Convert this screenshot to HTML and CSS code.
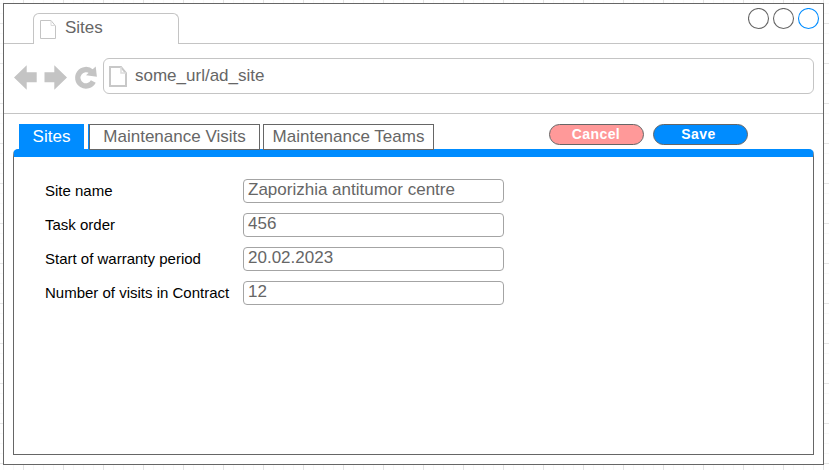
FILE: index.html
```html
<!DOCTYPE html>
<html lang="en">
<head>
<meta charset="utf-8">
<title>Sites</title>
<link rel="stylesheet" href="styles.css">
</head>
<body>
<div class="window">
  <header class="titlebar">
    <div class="browser-tab">
      <svg class="tab-icon" width="16" height="19" viewBox="0 0 16 19"><path d="M.5.5H11L15.500 6V18.500H.5Z" fill="#fff" stroke="#c4c4c4"/><path d="M11 .5V5.500H15.500" fill="none" stroke="#dcdcdc"/></svg>
      <span>Sites</span>
    </div>
    <svg class="controls" width="72" height="22" viewBox="0 0 72 22" fill="#fff" stroke-width="1.100"><circle cx="10.500" cy="10.500" r="10" stroke="#666"/><circle cx="35.500" cy="10.500" r="10" stroke="#666"/><circle cx="60.500" cy="10.500" r="10" stroke="#008cff"/></svg>
  </header>
  <div class="toolbar">
    <svg class="nav" width="84" height="26" viewBox="0 0 84 26" fill="#c4c4c4">
      <path d="M0 12.500L12.700 .2V7.300H22.700V17.300H12.700V24.800Z"/>
      <path d="M53 12.500L40.300 .2V7.300H30.500V17.300H40.300V24.800Z"/>
      <path d="M79.300 16.500A8.200 8.200 0 1 1 77.500 6.700" fill="none" stroke="#c4c4c4" stroke-width="5.400"/>
      <path d="M81.700 1.500L82.900 11.800L72 10.200Z"/>
    </svg>
    <div class="address">
      <svg class="page-icon" width="18" height="21" viewBox="0 0 18 21"><path d="M1 1H12L17 7V20H1Z" fill="#fff" stroke="#c8c8c8" stroke-width="2"/><path d="M12 1V7H17" fill="none" stroke="#dcdcdc" stroke-width="1.500"/></svg>
      <span>some_url/ad_site</span>
    </div>
  </div>
  <main class="content">
    <div class="bar">
      <nav class="tabs">
        <div class="tab active"><span>Sites</span></div>
        <div class="tab visits"><span>Maintenance Visits</span></div>
        <div class="tab teams"><span>Maintenance Teams</span></div>
      </nav>
      <button class="btn cancel">Cancel</button>
      <button class="btn save">Save</button>
    </div>
    <section class="panel">
      <div class="form">
        <div class="row"><span class="label">Site name</span><div class="field">Zaporizhia antitumor centre</div></div>
        <div class="row"><span class="label">Task order</span><div class="field">456</div></div>
        <div class="row"><span class="label">Start of warranty period</span><div class="field">20.02.2023</div></div>
        <div class="row"><span class="label">Number of visits in Contract</span><div class="field">12</div></div>
      </div>
    </section>
  </main>
</div>
</body>
</html>
```
FILE: styles.css
```css
* { box-sizing: border-box; }
body {
  margin: 0;
  width: 829px;
  height: 470px;
  padding: 3px;
  overflow: hidden;
  font-family: "Liberation Sans", Arial, sans-serif;
  font-size: 17px;
  color: #666;
  white-space: nowrap;
  background-color: #fff;
  background-image:
    linear-gradient(90deg, #e4e4e4 1px, transparent 1px),
    linear-gradient(#e4e4e4 1px, transparent 1px),
    linear-gradient(90deg, #f7f7f7 1px, transparent 1px),
    linear-gradient(#f7f7f7 1px, transparent 1px);
  background-size: 40px 40px, 40px 40px, 10px 10px, 10px 10px;
  background-position: 23px 23px, 23px 23px, 3px 3px, 3px 3px;
}
svg { display: block; flex: none; }
.window {
  width: 821px;
  height: 462px;
  border: 1px solid #666;
  background: #fff;
}
.titlebar {
  height: 40px;
  border-bottom: 1px solid #c4c4c4;
  display: flex;
  justify-content: space-between;
  padding: 0 3px 0 29px;
}
.browser-tab {
  width: 146px;
  height: 31px;
  margin-top: 9px;
  border: 1px solid #c4c4c4;
  border-bottom: 0;
  border-radius: 6px 6px 0 0;
  background: #fff;
  display: flex;
  line-height: 20px;
  padding: 4px 0 0 6px;
}
.tab-icon { margin: 2px 9px 0 0; }
.controls { margin-top: 4px; }
.toolbar {
  height: 70px;
  border-bottom: 1px solid #c4c4c4;
  display: flex;
  padding: 14px 9px 0 10px;
}
.nav { margin: 7px 5px 0 0; }
.address {
  flex: 1;
  height: 36px;
  border: 1px solid #c4c4c4;
  border-radius: 6px;
  display: flex;
  line-height: 20px;
  padding: 7px 5px;
}
.page-icon { margin-right: 8px; }
.content { padding: 10px 9px 0; }
.bar { display: flex; height: 25px; padding-left: 6px; }
.tabs { display: flex; width: 530px; }
.tab {
  height: 26px;
  line-height: 24px;
  border: 1px solid #666;
  text-align: center;
  position: relative;
  z-index: 1;
  background: #fff;
}
.active { width: 65px; background: #008cff; border-color: #008cff; color: #fff; }
.visits { width: 171px; margin-left: 5px; box-shadow: -1px 0 #008cff; }
.teams { width: 171px; margin-left: 3px; }
.btn {
  width: 95px;
  height: 21px;
  padding: 0 1px 1px 0;
  border: 1px solid #666;
  border-radius: 11px;
  font: bold 14px/17px "Liberation Sans", Arial, sans-serif;
  letter-spacing: .4px;
  color: #fff;
}
.cancel { background: #f99; }
.save { background: #008cff; margin-left: 9px; padding-right: 4px; }
.panel {
  width: 801px;
  height: 306px;
  border: 1px solid #666;
  border-top: 8px solid #008cff;
  border-radius: 5px 5px 0 0;
  padding: 21px 0 0 31px;
}
.form { display: grid; row-gap: 9px; }
.row { display: grid; grid-template-columns: 198px 261px; height: 25px; }
.label { font-size: 15px; line-height: 26px; color: #000; }
.field {
  height: 24px;
  margin-top: 1px;
  border: 1px solid #a4a4a4;
  border-radius: 4px;
  line-height: 20px;
  padding-left: 4px;
}
```
